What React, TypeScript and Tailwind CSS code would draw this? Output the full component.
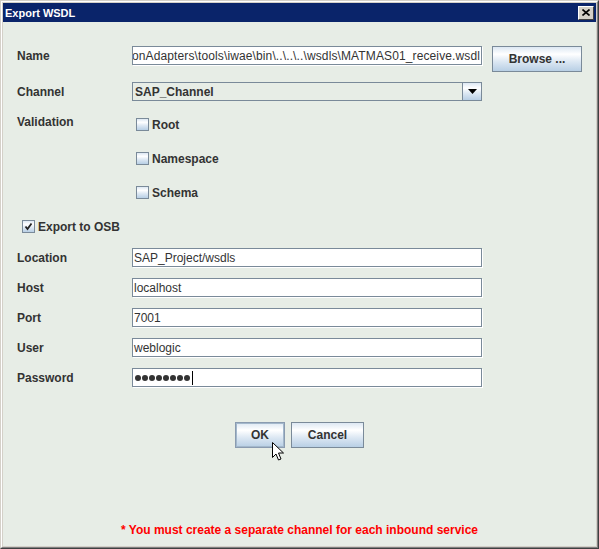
import React from "react";

const grad =
  "bg-[linear-gradient(180deg,#dde8f3_0%,#ffffff_30%,#dde8f3_60%,#b8cfe5_100%)]";

function Label({ children }: { children: React.ReactNode }) {
  return (
    <div className="w-[115px] h-[19px] flex items-center font-bold text-[#333333]">
      {children}
    </div>
  );
}

function Field({ children, className = "" }: { children?: React.ReactNode; className?: string }) {
  return (
    <div
      className={`w-[350px] h-[19px] border border-[#7a8a99] bg-white flex items-center pl-[1px] overflow-hidden whitespace-nowrap text-[#333333] shadow-[1px_1px_0_#ffffff] ${className}`}
    >
      {children}
    </div>
  );
}

function CheckBox({ checked = false }: { checked?: boolean }) {
  return (
    <div className={`w-[13px] h-[13px] border border-[#7a8a99] ${grad} flex items-center justify-center`}>
      {checked && (
        <svg width="9" height="9" viewBox="0 0 9 9">
          <path d="M1.5 4.5 L3.5 7 L7.5 1.5" stroke="#222" strokeWidth="1.8" fill="none" />
        </svg>
      )}
    </div>
  );
}

function CheckItem({ label, checked = false }: { label: string; checked?: boolean }) {
  return (
    <div className="h-[19px] flex items-center gap-[3px] font-bold text-[#333333]">
      <CheckBox checked={checked} />
      <span>{label}</span>
    </div>
  );
}

export default function App() {
  return (
    <div className="w-[599px] h-[549px] relative font-['Liberation_Sans',Arial,sans-serif] text-[12px] border border-t-[#d4d0c8] border-l-[#d4d0c8] border-r-[#404040] border-b-[#404040] bg-[#d4d0c8]">
      <div className="w-full h-full border border-t-white border-l-white border-r-[#808080] border-b-[#808080] p-[1px] flex flex-col">
        {/* Title bar */}
        <div className="h-[19px] bg-[#0a246a] flex items-center justify-between pl-[2px] pr-[2px]">
          <span className="text-white font-bold text-[11px] leading-none mt-[2px]">Export WSDL</span>
          <div className="w-[16px] h-[14px] bg-[#d4d0c8] border border-t-white border-l-white border-r-[#404040] border-b-[#404040] flex items-center justify-center">
            <svg width="8" height="7" viewBox="0 0 8 7">
              <path d="M0.5 0.5 L7.5 6.5 M7.5 0.5 L0.5 6.5" stroke="#000" strokeWidth="1.6" />
            </svg>
          </div>
        </div>

        {/* Body */}
        <div className="flex-1 bg-[#e7ede6] flex flex-col">
          <div className="pl-[14px] flex flex-col">
            {/* Name */}
            <div className="flex items-start mt-[24px]">
              <Label>Name</Label>
              <Field className="justify-end pr-[1px]">
                <span className="tracking-[0.12px]">onAdapters\tools\iwae\bin\..\..\..\wsdls\MATMAS01_receive.wsdl</span>
              </Field>
              <div
                className={`ml-[10px] w-[90px] h-[26px] border border-[#7a8a99] ${grad} flex items-center justify-center font-bold text-[#333333]`}
              >
                Browse ...
              </div>
            </div>

            {/* Channel */}
            <div className="flex items-start mt-[10px]">
              <Label>Channel</Label>
              <div className="w-[350px] h-[19px] border border-[#7a8a99] bg-[#e7ede6] flex">
                <div className="flex-1 flex items-center pl-[2px] font-bold text-[#333333]">SAP_Channel</div>
                <div className={`w-[19px] h-full border-l border-[#7a8a99] ${grad} flex items-center justify-center`}>
                  <svg width="9" height="5" viewBox="0 0 9 5">
                    <path d="M0 0 L9 0 L4.5 5 Z" fill="#000" />
                  </svg>
                </div>
              </div>
            </div>

            {/* Validation */}
            <div className="flex items-start mt-[11px]">
              <Label>Validation</Label>
              <div className="flex flex-col pt-[3px] pl-[4px] gap-[15px]">
                <CheckItem label="Root" />
                <CheckItem label="Namespace" />
                <CheckItem label="Schema" />
              </div>
            </div>

            {/* Export to OSB */}
            <div className="mt-[15px] ml-[5px]">
              <CheckItem label="Export to OSB" checked />
            </div>

            {/* Location */}
            <div className="flex items-start mt-[12px]">
              <Label>Location</Label>
              <Field>SAP_Project/wsdls</Field>
            </div>
            <div className="flex items-start mt-[11px]">
              <Label>Host</Label>
              <Field>localhost</Field>
            </div>
            <div className="flex items-start mt-[11px]">
              <Label>Port</Label>
              <Field>7001</Field>
            </div>
            <div className="flex items-start mt-[11px]">
              <Label>User</Label>
              <Field>weblogic</Field>
            </div>
            <div className="flex items-start mt-[11px]">
              <Label>Password</Label>
              <Field className="pl-[2px]">
                <div className="flex items-center gap-[1px]">
                  {[0, 1, 2, 3, 4, 5, 6, 7].map((i) => (
                    <span key={i} className="w-[6px] h-[6px] rounded-full bg-[#333333] inline-block" />
                  ))}
                  <span className="w-[1px] h-[14px] bg-black inline-block ml-[1px]" />
                </div>
              </Field>
            </div>
          </div>

          {/* Buttons */}
          <div className="flex justify-center gap-[6px] mt-[35px]">
            <div
              className={`w-[50px] h-[26px] border border-[#8a9bb0] shadow-[inset_0_0_0_1px_#a3b8cc] ${grad} flex items-center justify-center font-bold text-[#333333]`}
            >
              OK
            </div>
            <div
              className={`w-[73px] h-[26px] border border-[#7a8a99] ${grad} flex items-center justify-center font-bold text-[#333333]`}
            >
              Cancel
            </div>
          </div>

          {/* Note */}
          <div className="mt-[75px] h-[15px] leading-[15px] text-center font-bold text-[#ff0000]">
            * You must create a separate channel for each inbound service
          </div>
        </div>
      </div>

      {/* Mouse cursor */}
      <svg
        className="absolute left-[271px] top-[441px]"
        width="13"
        height="20"
        viewBox="0 0 13 20"
      >
        <path
          d="M0.5 0.5 L0.5 15.5 L4 12 L6.5 18 L9 17 L6.5 11 L11.5 11 Z"
          fill="#fff"
          stroke="#000"
          strokeWidth="1"
          strokeLinejoin="miter"
        />
      </svg>
    </div>
  );
}
